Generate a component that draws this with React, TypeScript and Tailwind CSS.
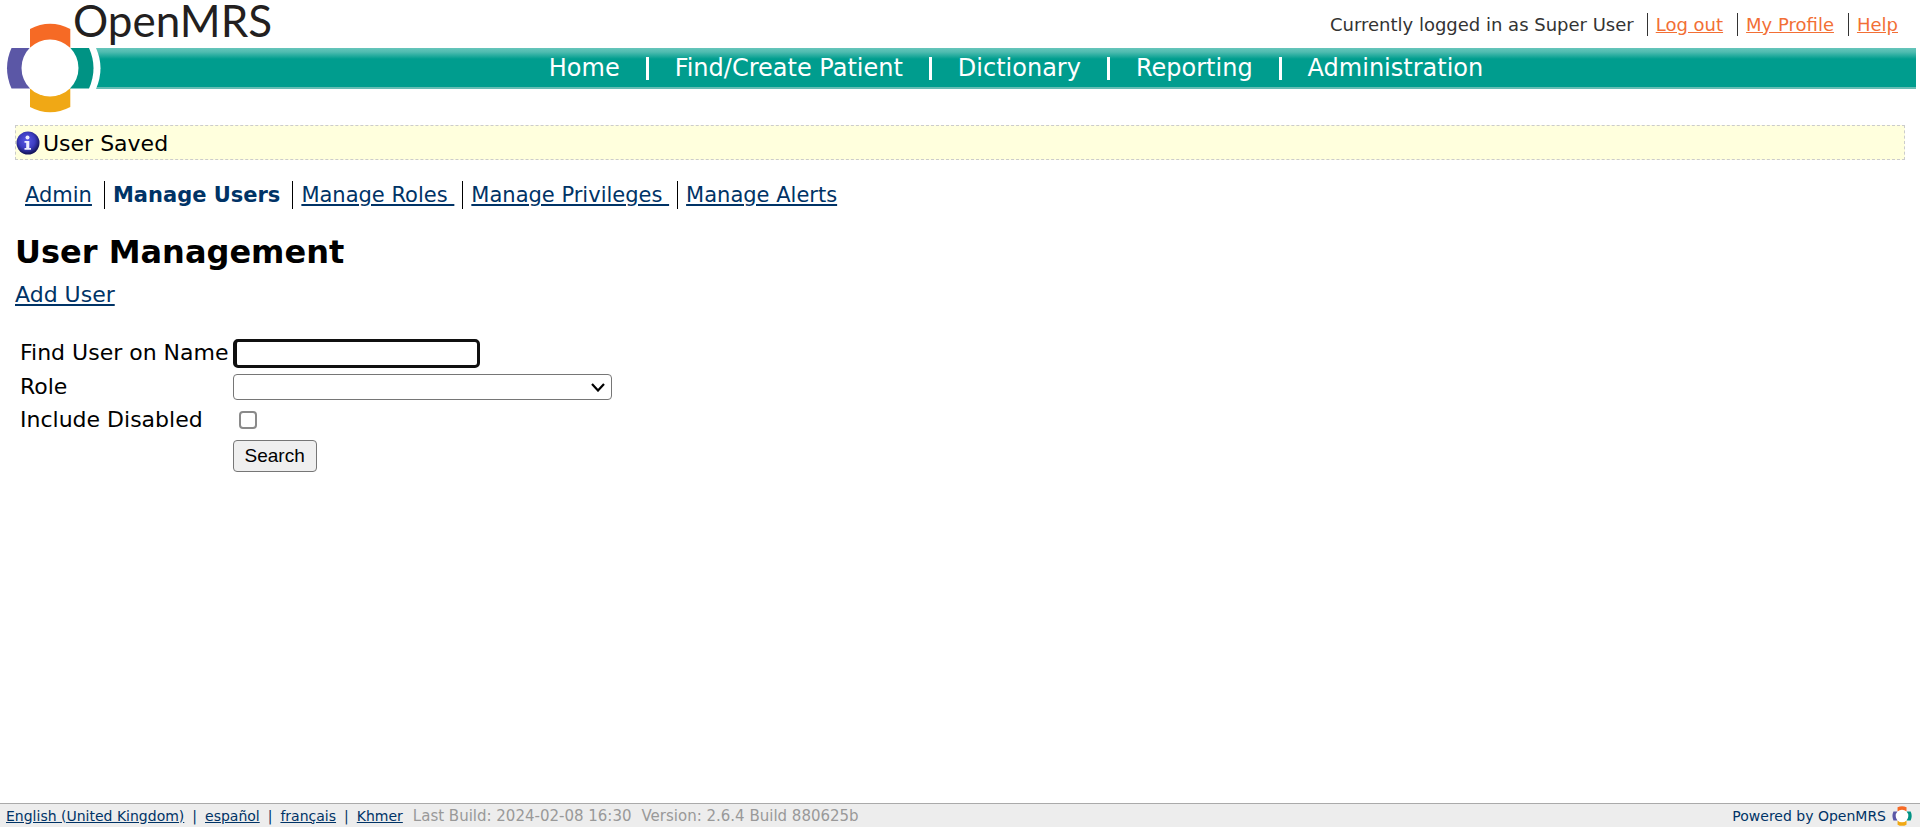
import React from "react";

const navItems = ["Home", "Find/Create Patient", "Dictionary", "Reporting", "Administration"];
const tabs = ["Admin", "Manage Users", "Manage Roles\u00a0", "Manage Privileges\u00a0", "Manage Alerts"];
const languages = ["English (United Kingdom)", "español", "français", "Khmer"];

function Emblem({ className }: { className: string }) {
  return (
    <svg viewBox="0 0 88 90" className={className} aria-hidden="true">
      <path d="M24 6Q44 -4.500 64.300 6V26H24Z" fill="#f66a25" />
      <path d="M24 84Q44 94.500 64.300 84V64H24Z" fill="#f0a815" />
      <path d="M5.500 25Q-3.500 45 5.500 65.500H24V25Z" fill="#5b57a6" />
      <path d="M83 25Q92 45 83 65.500H64V25Z" fill="#009384" />
      <circle cx="44" cy="45" r="28.500" fill="#fff" />
    </svg>
  );
}

function InfoIcon() {
  return (
    <svg viewBox="0 0 24 24" className="h-6 w-6 shrink-0" aria-hidden="true">
      <defs>
        <radialGradient id="info" cx="45%" cy="40%" r="58%">
          <stop offset="0" stopColor="#5a5ae6" />
          <stop offset="0.6" stopColor="#3c3cc0" />
          <stop offset="1" stopColor="#15155c" />
        </radialGradient>
      </defs>
      <circle cx="12" cy="12" r="11.500" fill="url(#info)" />
      <circle cx="11.500" cy="6.500" r="2" fill="#eef" />
      <path d="M8.500 10h4.800v7h1.700v1.800H8.500V17h1.700v-5.200H8.500Z" fill="#eef" />
    </svg>
  );
}

export default function App() {
  return (
    <div className="flex min-h-screen flex-col bg-white font-['DejaVu_Sans',sans-serif] text-[22px] leading-7 text-black">
      <header className="relative mr-1">
        <div className="flex h-12 items-start justify-between">
          <a href="#home" className="ml-[73px] font-[Lato,sans-serif] text-[44px] leading-10 text-[#231f20]">
            OpenMRS
          </a>
          <div className="mr-[18px] flex pt-[13px] text-[18px] leading-[23px] text-[#333]">
            <span className="pr-[13px]">Currently logged in as Super User</span>
            <a href="#logout" className="border-l border-[#333] pl-2 pr-[14px] text-[#f26f35] underline">Log out</a>
            <a href="#profile" className="border-l border-[#333] pl-2 pr-[14px] text-[#f26f35] underline">My Profile</a>
            <a href="#help" className="border-l border-[#333] pl-2 text-[#f26f35] underline">Help</a>
          </div>
        </div>
        <div className="ml-24 h-[41px] border-b-2 border-[#66bdb4] bg-[linear-gradient(#66c5bb_0px,#4fbcb0_4px,#009d8e_11px)]">
          <nav className="flex items-center justify-center pl-5 pt-[9px] text-[24px] leading-[23px] text-white">
            {navItems.map((item, i) => (
              <a key={item} href="#nav" className={i ? "border-l-[3px] border-white px-[26px]" : "px-[26px]"}>
                {item}
              </a>
            ))}
          </nav>
        </div>
        <svg viewBox="0 0 104 41" className="absolute left-0 top-12 h-[41px] w-[104px]" aria-hidden="true">
          <path d="M0 0H96Q105 20 96 41H0Z" fill="#fff" />
        </svg>
        <Emblem className="absolute left-1.5 top-[23px] h-[90px] w-[88px]" />
      </header>

      <main className="px-[15px] pt-9">
        <div role="status" className="flex h-[35px] items-center gap-[3px] border border-dashed border-[#ccc] bg-[#ffffdd]">
          <InfoIcon />
          <span className="pt-0.5">User Saved</span>
        </div>

        <ul className="mt-[21px] flex pl-[10px] text-[21px] leading-7 text-[#036]">
          {tabs.map((tab, i) => (
            <li key={tab} className={i === 0 ? "pr-3" : i === 1 ? "border-l border-black pl-2 pr-3" : "border-l border-black px-2"}>
              <a href="#tab" className={i === 1 ? "font-bold" : "underline"}>{tab}</a>
            </li>
          ))}
        </ul>

        <h1 className="mt-[23px] text-[32px] font-bold leading-10">User Management</h1>
        <a href="#add" className="mt-[9px] inline-block text-[#036] underline">Add User</a>

        <form className="mt-[27px] grid w-fit grid-cols-[auto_auto] items-center gap-x-1 px-[5px]" onSubmit={(e) => e.preventDefault()}>
          <label htmlFor="name" className="leading-[34px]">Find User on Name</label>
          <input id="name" type="text" className="h-[29px] w-[247px] rounded-[5px] border-[3px] border-l-4 border-[#101010] bg-white px-1 text-lg outline-none" />
          <label htmlFor="role" className="leading-[34px]">Role</label>
          <div className="relative flex">
            <select id="role" className="h-[26px] w-[379px] appearance-none rounded-[4px] border border-[#767676] bg-white px-1 text-base">
              <option></option>
            </select>
            <svg viewBox="0 0 14 9" className="pointer-events-none absolute right-[7px] top-[9px] h-[9px] w-[14px]" aria-hidden="true">
              <path d="M1 1L7 7.500L13 1" fill="none" stroke="#000" strokeWidth="2.200" />
            </svg>
          </div>
          <label htmlFor="disabled" className="leading-8">Include Disabled</label>
          <input id="disabled" type="checkbox" className="ml-1.5 h-[18px] w-[18px] appearance-none rounded-[4px] border-2 border-[#8a8a8a] bg-white" />
          <button type="submit" className="col-start-2 mt-1 h-8 w-fit rounded-[4px] border border-[#767676] bg-[#efefef] px-[11px] font-['Liberation_Sans',sans-serif] text-[19px] leading-7">
            Search
          </button>
        </form>
      </main>

      <footer className="mt-auto flex h-6 items-center justify-between border-t border-[#aaa] bg-[#ededed] pl-1.5 pr-2 text-[14px] leading-[22px]">
        <div className="flex text-[#999]">
          {languages.map((l, i) => (
            <React.Fragment key={l}>
              {i > 0 && <span className="px-2 text-[#036]">|</span>}
              <a href="#lang" className="text-[#036] underline">{l}</a>
            </React.Fragment>
          ))}
          <span className="ml-2.5 text-[15px]">Last Build: 2024-02-08 16:30</span>
          <span className="ml-2.5 text-[15px]">Version: 2.6.4 Build 880625b</span>
        </div>
        <a href="#openmrs" className="flex items-center gap-1.5 text-[#036]">
          Powered by OpenMRS
          <Emblem className="h-5 w-5" />
        </a>
      </footer>
    </div>
  );
}
